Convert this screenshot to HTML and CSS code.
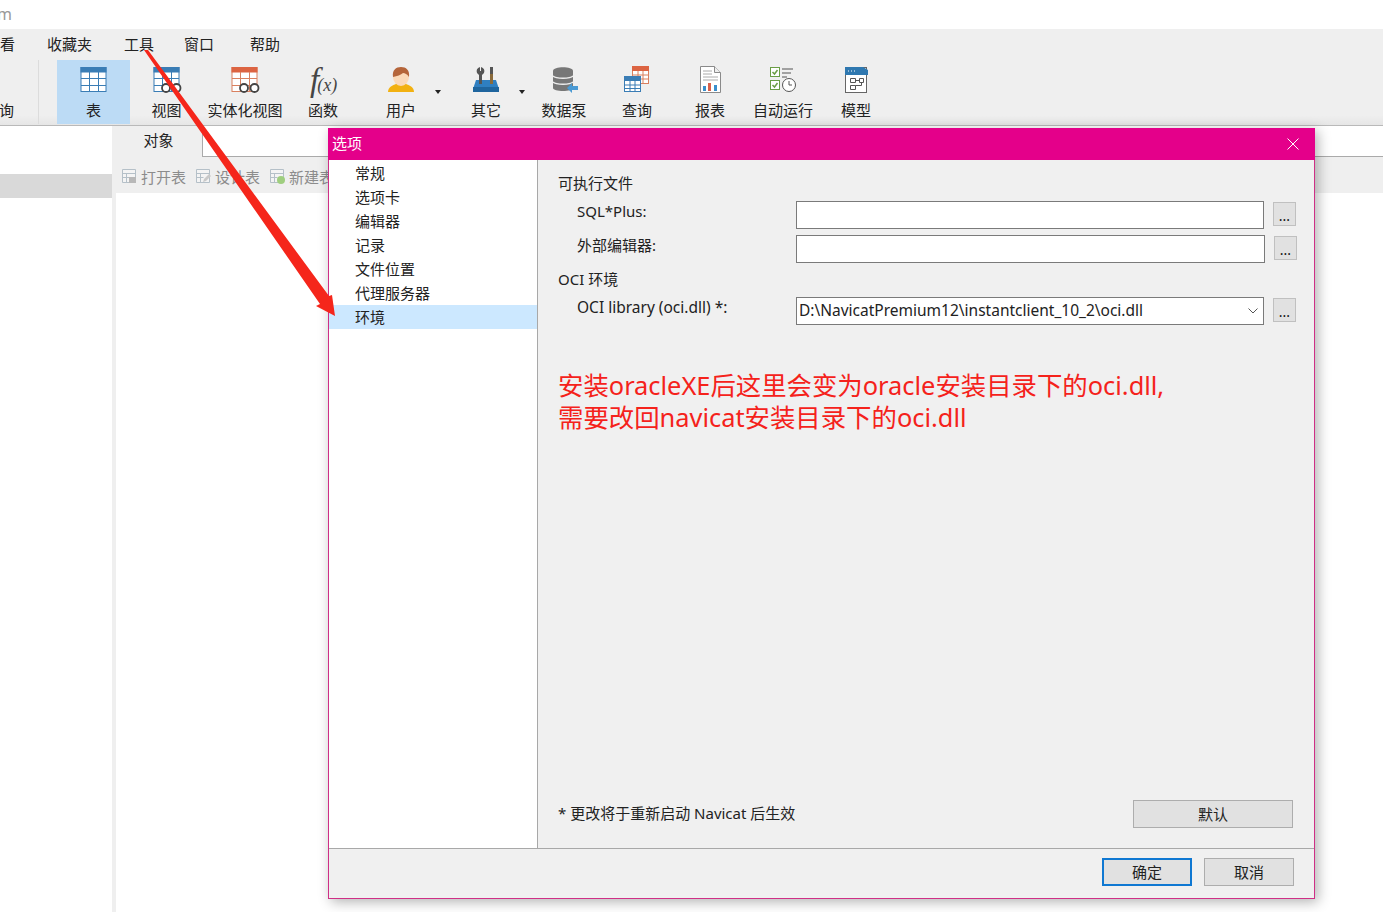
FILE: index.html
```html
<!DOCTYPE html>
<html lang="zh-CN">
<head>
    <meta charset="UTF-8">
    <title>选项</title>
    <link rel="stylesheet" href="styles.css">
</head>

<body>
    <div class="appbar"><span class="appname">m</span></div>

    <nav class="menubar">
        <span class="menu-cut">查看</span>
        <span class="menu-item menu-fav">收藏夹</span>
        <span class="menu-item menu-tools">工具</span>
        <span class="menu-item menu-win">窗口</span>
        <span class="menu-item menu-help">帮助</span>
    </nav>

    <div class="toolbar">
        <div class="tool-cut">查询</div>

        <div class="tool tool-active w73">
            <svg class="icon" viewBox="0 0 30 30"><rect x="2" y="2.500" width="25" height="24" fill="#fff" stroke="#3a7db5"/><rect x="1.500" y="2" width="26" height="5.500" fill="#3a7db5"/><path d="M2 13.500h25M2 20.500h25M10.500 7v19M19.500 7v19" stroke="#3a7db5" fill="none"/></svg>
            <span>表</span>
        </div>
        <div class="tool w73">
            <svg class="icon" viewBox="0 0 30 30"><rect x="2" y="2.500" width="25" height="24" fill="#fff" stroke="#3a7db5"/><rect x="1.500" y="2" width="26" height="5.500" fill="#3a7db5"/><path d="M2 13.500h25M2 20.500h25M10.500 7v19M19.500 7v19" stroke="#3a7db5" fill="none"/><circle cx="14" cy="23" r="4" fill="#fff" stroke="#444" stroke-width="1.800"/><circle cx="24.500" cy="23" r="4" fill="#fff" stroke="#444" stroke-width="1.800"/></svg>
            <span>视图</span>
        </div>
        <div class="tool w84">
            <svg class="icon" viewBox="0 0 30 30"><rect x="2" y="2.500" width="25" height="24" fill="#fff" stroke="#d9805f"/><rect x="1.500" y="2" width="26" height="5.500" fill="#dc6442"/><path d="M2 13.500h25M2 20.500h25M10.500 7v19M19.500 7v19" stroke="#d9805f" fill="none"/><circle cx="14" cy="23" r="4" fill="#fff" stroke="#444" stroke-width="1.800"/><circle cx="24.500" cy="23" r="4" fill="#fff" stroke="#444" stroke-width="1.800"/></svg>
            <span>实体化视图</span>
        </div>
        <div class="tool w72">
            <div class="icon fx"><i>f</i><em>(x)</em></div>
            <span>函数</span>
        </div>
        <div class="tool w84">
            <svg class="icon" viewBox="0 0 30 30"><path d="M2 27c0-5 5-7 8-8h10c3 1 8 3 8 8z" fill="#f2b111"/><ellipse cx="15" cy="12" rx="8" ry="9" fill="#fbd9b8"/><path d="M7 12c-1-7 3-10 8-10s9 3 8 10c-2-3-4-4-6-4-2 2-6 3-10 4z" fill="#b5653a"/></svg>
            <span>用户</span>
            <b class="caret"></b>
        </div>
        <div class="tool w86">
            <svg class="icon" viewBox="0 0 30 30"><path d="M9 2c-3 1-4 3-3 6l2 2v9h3v-9l2-2c1-3 0-5-3-6v4H9z" fill="#555"/><rect x="19" y="2" width="3" height="7" fill="#555"/><rect x="19" y="9" width="3" height="10" fill="#8a6a3a"/><path d="M2 24l3-9h3v4h3v-4h8v4h3v-4h3l3 9z" fill="#2f7fc1"/><rect x="2" y="22" width="26" height="5" fill="#1f659e"/></svg>
            <span>其它</span>
            <b class="caret"></b>
        </div>
        <div class="tool w70">
            <svg class="icon" viewBox="0 0 30 30"><path d="M4 6c0-5 20-5 20 0v17c0 4-20 4-20 0z" fill="#777"/><path d="M4 11c3 3 17 3 20 0M4 17c3 3 17 3 20 0" stroke="#eee" stroke-width="1.600" fill="none"/><path d="M18 23l5-5v3h6v4h-6v3z" fill="#4a9ad4"/></svg>
            <span>数据泵</span>
        </div>
        <div class="tool w76">
            <svg class="icon" viewBox="0 0 30 30"><rect x="10.500" y="1.500" width="16" height="17" fill="#fff" stroke="#d9805f"/><rect x="10" y="1" width="17" height="5" fill="#dc6442"/><path d="M10.500 10h16M10.500 14h16M16 6v12M21 6v12" stroke="#d9805f" fill="none"/><rect x="2.500" y="11.500" width="16" height="15" fill="#fff" stroke="#3a7db5"/><rect x="2" y="11" width="17" height="5" fill="#3a7db5"/><path d="M2.500 20h16M2.500 23.500h16M8 16v11M13 16v11" stroke="#3a7db5" fill="none"/></svg>
            <span>查询</span>
        </div>
        <div class="tool w70">
            <svg class="icon" viewBox="0 0 30 30"><path d="M5.500 1.500h14l6 6v20h-20z" fill="#fff" stroke="#8a8a8a"/><path d="M19.500 1.500v6h6" fill="#eee" stroke="#8a8a8a"/><path d="M8 6h9M8 9h9M8 12h15M8 15h15" stroke="#aaa" fill="none"/><rect x="8" y="21" width="3" height="5" fill="#3a8fcc"/><rect x="13" y="18" width="3" height="8" fill="#d9604a"/><rect x="19" y="20" width="3" height="6" fill="#3a8fcc"/></svg>
            <span>报表</span>
        </div>
        <div class="tool w76">
            <svg class="icon" viewBox="0 0 30 30"><rect x="2.500" y="2.500" width="9" height="9" fill="#fff" stroke="#6a9e45"/><rect x="2.500" y="15.500" width="9" height="9" fill="#fff" stroke="#6a9e45"/><path d="M4.500 7l2 2 3-4M4.500 20l2 2 3-4" stroke="#6a9e45" stroke-width="1.500" fill="none"/><path d="M14 4h11M14 8h9M14 12h5" stroke="#888" stroke-width="1.500" fill="none"/><circle cx="21" cy="20" r="6.500" fill="#fff" stroke="#555"/><path d="M21 16v4h3" stroke="#555" fill="none"/></svg>
            <span>自动运行</span>
        </div>
        <div class="tool w70">
            <svg class="icon" viewBox="0 0 30 30"><rect x="4.500" y="2.500" width="21" height="25" fill="#fff" stroke="#666"/><path d="M4 2h18l5 3v5H4z" fill="#2f78b0"/><path d="M7 6h1M10 6h1M13 6h1" stroke="#fff"/><path d="M9.500 13.500h5v4h-5zM18.500 13.500h4v4h-4zM9.500 20.500h5v4h-5zM14.500 15.500h4M20.500 17.500v3h-6" stroke="#555" fill="none"/></svg>
            <span>模型</span>
        </div>
    </div>

    <div class="main">
        <aside class="sidebar"><div class="side-row"></div></aside>
        <section class="content">
            <div class="tabs">
                <div class="tab">对象</div>
                <div class="tab-rest"></div>
            </div>
            <div class="actions">
                <span class="action">
                    <svg viewBox="0 0 16 16"><path d="M1.500 1.500h13v13h-13zM1.500 5.500h13M1.500 9.500h8M5.500 5.500v9" fill="#f4f4f4" stroke="#b5c0c8"/><rect x="8" y="9" width="7" height="6" fill="#b8b8b8"/></svg>打开表
                </span>
                <span class="action">
                    <svg viewBox="0 0 16 16"><path d="M1.500 1.500h13v13h-13zM1.500 5.500h13M1.500 9.500h7M5.500 5.500v9" fill="#f4f4f4" stroke="#b5c0c8"/><path d="M8 14l1-3 5-5 2 2-5 5z" fill="#c9c9c9"/></svg>设计表
                </span>
                <span class="action">
                    <svg viewBox="0 0 16 16"><path d="M1.500 1.500h13v13h-13zM1.500 5.500h13M1.500 9.500h7M5.500 5.500v9" fill="#f4f4f4" stroke="#b5c0c8"/><circle cx="12" cy="12" r="4" fill="#9fce7f"/></svg>新建表
                </span>
            </div>
            <div class="pane"></div>
        </section>
    </div>

    <div class="dialog">
        <header class="dialog-title">
            <span>选项</span>
            <svg class="close" viewBox="0 0 12 12"><path d="M.5.500l11 11M11.500.500l-11 11" stroke="#fff" fill="none"/></svg>
        </header>
        <div class="dialog-body">
            <ul class="opt-list">
                <li>常规</li>
                <li>选项卡</li>
                <li>编辑器</li>
                <li>记录</li>
                <li>文件位置</li>
                <li>代理服务器</li>
                <li class="selected">环境</li>
            </ul>
            <div class="panel">
                <div class="group-title">可执行文件</div>
                <div class="row">
                    <label>SQL*Plus:</label>
                    <div class="field"></div>
                    <button class="dots">...</button>
                </div>
                <div class="row row-wide">
                    <label>外部编辑器:</label>
                    <div class="field"></div>
                    <button class="dots">...</button>
                </div>
                <div class="group-title group-oci">OCI 环境</div>
                <div class="row">
                    <label class="label-lib">OCI library (oci.dll) *:</label>
                    <div class="field field-select">
                        <span>D:\NavicatPremium12\instantclient_10_2\oci.dll</span>
                        <svg viewBox="0 0 10 6"><path d="M.5.500L5 5 9.500.500" stroke="#555" fill="none"/></svg>
                    </div>
                    <button class="dots">...</button>
                </div>
                <p class="note-red">安装oracleXE后这里会变为oracle安装目录下的oci.dll,<br>需要改回navicat安装目录下的oci.dll</p>
                <div class="panel-foot">
                    <span class="foot-note">* 更改将于重新启动 Navicat 后生效</span>
                    <button class="btn btn-default">默认</button>
                </div>
            </div>
        </div>
        <footer class="dialog-foot">
            <button class="btn btn-ok">确定</button>
            <button class="btn">取消</button>
        </footer>
    </div>

    <svg class="arrow" viewBox="0 0 1383 912"><polygon points="144,50 148,50 329,296 332,295 335,316 316,306 320,304" fill="#f5261b"/></svg>
</body>

</html>
```

FILE: styles.css
```css
* {
    box-sizing: border-box;
}

body {
    margin: 0;
    width: 1383px;
    height: 912px;
    overflow: hidden;
    position: relative;
    display: flex;
    flex-direction: column;
    background: #fff;
    color: #222;
    font-family: "Noto Sans", "Noto Sans CJK SC", sans-serif;
    font-size: 15px;
}

.appbar {
    height: 29px;
    flex: none;
    line-height: 29px;
    overflow: hidden;
}

.appname {
    display: block;
    margin-left: -3px;
    color: #999;
    font-size: 16px;
}

.menubar {
    height: 31px;
    flex: none;
    display: flex;
    align-items: center;
    padding-bottom: 2px;
    background: #efefef;
}

.menu-cut {
    width: 15px;
    flex: none;
    display: flex;
    justify-content: flex-end;
    white-space: nowrap;
}

.menu-fav { margin-left: 32px; }
.menu-tools { margin-left: 32px; }
.menu-win { margin-left: 30px; }
.menu-help { margin-left: 36px; }

.toolbar {
    height: 66px;
    flex: none;
    display: flex;
    padding-bottom: 1px;
    background: linear-gradient(#efefef 85%, #e6e6e6);
    border-bottom: 1px solid #b9b9b9;
}

.tool-cut {
    width: 39px;
    height: 64px;
    flex: none;
    margin-right: 18px;
    padding: 39px 24px 0 0;
    display: flex;
    justify-content: flex-end;
    white-space: nowrap;
    border-right: 1px solid #dcdcdc;
}

.tool {
    position: relative;
    height: 64px;
    flex: none;
    display: flex;
    flex-direction: column;
    align-items: center;
    padding-top: 5px;
    white-space: nowrap;
}

.tool span {
    margin-top: 4px;
    line-height: 22px;
}

.tool-active {
    background: #bcdbf5;
}

.w70 { width: 70px; }
.w72 { width: 72px; }
.w73 { width: 73px; }
.w76 { width: 76px; }
.w84 { width: 84px; }
.w86 { width: 86px; }

.icon {
    width: 30px;
    height: 30px;
    display: block;
}

.fx {
    display: flex;
    align-items: baseline;
    padding-left: 2px;
    font-family: "Liberation Serif", serif;
    color: #444;
    white-space: nowrap;
}

.fx i {
    font-size: 33px;
    line-height: 30px;
}

.fx em {
    margin-left: -2px;
    font-size: 18px;
}

.caret {
    position: absolute;
    left: 76px;
    top: 30px;
    border: 3px solid transparent;
    border-top: 4px solid #222;
    border-bottom: 0;
}

.main {
    flex: 1;
    display: flex;
    min-height: 0;
}

.sidebar {
    width: 112px;
    flex: none;
    padding-top: 48px;
}

.side-row {
    height: 24px;
    background: #d9d9d9;
}

.content {
    flex: 1;
    display: flex;
    flex-direction: column;
    background: #efefef;
}

.tabs {
    height: 31px;
    flex: none;
    display: flex;
}

.tab {
    width: 90px;
    padding-left: 3px;
    line-height: 29px;
    text-align: center;
}

.tab-rest {
    flex: 1;
    background: #fff;
    border-left: 1px solid #aaa;
    border-bottom: 1px solid #aaa;
}

.actions {
    height: 36px;
    flex: none;
    display: flex;
    gap: 9px;
    align-items: center;
    padding: 2px 0 0 9px;
    color: #8c8c8c;
}

.action {
    display: flex;
    align-items: center;
    gap: 4px;
}

.action svg {
    width: 16px;
    height: 16px;
}

.pane {
    flex: 1;
    margin-left: 4px;
    background: #fff;
}

.dialog {
    position: absolute;
    left: 328px;
    top: 128px;
    width: 987px;
    height: 771px;
    display: flex;
    flex-direction: column;
    background: #f0f0f0;
    border: 1px solid #cf2f86;
    border-top: 0;
    box-shadow: 3px 3px 12px rgba(0, 0, 0, 0.3);
}

.dialog-title {
    height: 32px;
    flex: none;
    margin: 0 -1px;
    padding: 0 16px 3px 4px;
    display: flex;
    align-items: center;
    justify-content: space-between;
    background: #e4008a;
    color: #fff;
}

.close {
    width: 12px;
    height: 12px;
    margin-top: 3px;
}

.dialog-body {
    flex: 1;
    display: flex;
    min-height: 0;
}

.opt-list {
    width: 209px;
    flex: none;
    margin: 0;
    padding: 1px 0 0;
    list-style-type: none;
    background: #fff;
    border-right: 1px solid #a8a8a8;
}

.opt-list li {
    height: 24px;
    padding-left: 26px;
    line-height: 24px;
}

.opt-list li.selected {
    background: #cce8ff;
}

.panel {
    flex: 1;
    display: flex;
    flex-direction: column;
    padding: 11px 18px 20px 20px;
}

.group-title {
    height: 24px;
    line-height: 24px;
    margin-bottom: 6px;
}

.group-oci {
    margin-top: -2px;
}

.row {
    height: 28px;
    display: flex;
    margin-bottom: 6px;
}

.row label {
    width: 238px;
    flex: none;
    padding-left: 19px;
    line-height: 21px;
}

.row .label-lib {
    font-size: 15.500px;
}

.field {
    width: 468px;
    flex: none;
    background: #fff;
    border: 1px solid #7a7a7a;
}

.row-wide .field {
    width: 469px;
}

.field-select {
    display: flex;
    align-items: center;
    justify-content: space-between;
    padding: 0 5px 2px 2px;
    font-size: 15.500px;
}

.field-select svg {
    width: 10px;
    height: 6px;
    margin-top: 2px;
}

.dots {
    width: 23px;
    height: 24px;
    margin: 1px 0 0 9px;
    padding: 3px 0 0;
    font: inherit;
    font-size: 14px;
    color: #111;
    background: #e1e1e1;
    border: 1px solid #c0c0c0;
}

.note-red {
    margin: 38px 0 0;
    color: #f5221b;
    font-size: 25.400px;
    line-height: 32px;
}

.panel-foot {
    margin-top: auto;
    display: flex;
    align-items: center;
    justify-content: space-between;
    padding-right: 4px;
}

.foot-note {
    padding-bottom: 3px;
}

.btn {
    width: 90px;
    height: 28px;
    padding: 0 0 2px;
    font: inherit;
    color: #222;
    background: #e1e1e1;
    border: 1px solid #adadad;
}

.btn-default {
    width: 160px;
}

.btn-ok {
    border: 2px solid #0f78d2;
}

.dialog-foot {
    height: 50px;
    flex: none;
    display: flex;
    justify-content: flex-end;
    gap: 12px;
    padding: 9px 20px 0 0;
    border-top: 1px solid #a8a8a8;
}

.arrow {
    position: absolute;
    left: 0;
    top: 0;
    width: 1383px;
    height: 912px;
    pointer-events: none;
}
```
